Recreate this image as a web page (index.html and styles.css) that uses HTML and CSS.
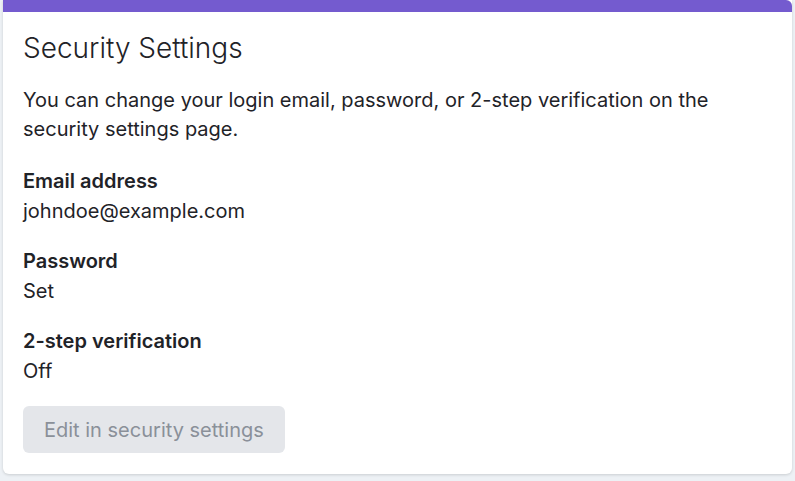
FILE: index.html
```html
<!DOCTYPE html>
<html lang="en">
<head>
    <meta charset="UTF-8">
    <meta name="viewport" content="width=device-width, initial-scale=1.0">
    <title>Security Settings</title>
    <link rel="stylesheet" href="styles.css">
</head>
<body>
    <div class="card">
        <div class="card-bar"></div>
        <div class="card-body">
            <h2>Security Settings</h2>
            <p class="intro">You can change your login email, password, or 2-step verification on the security settings page.</p>

            <div class="field">
                <div class="label">Email address</div>
                <div class="value">johndoe@example.com</div>
            </div>

            <div class="field">
                <div class="label">Password</div>
                <div class="value">Set</div>
            </div>

            <div class="field">
                <div class="label">2-step verification</div>
                <div class="value">Off</div>
            </div>

            <div>
                <button class="edit-btn" disabled>Edit in security settings</button>
            </div>
        </div>
    </div>
</body>
</html>
```

FILE: styles.css
```css
body {
    font-family: Inter, "Noto Sans", sans-serif;
    margin: 0;
    padding: 0 3px;
    background: #edf1f5;
    color: #1f2328;
}

.card {
    background: #ffffff;
    border-radius: 0 0 6px 6px;
    overflow: hidden;
    box-shadow: 0 1px 3px rgba(0, 0, 0, 0.15);
    margin-bottom: 8px;
}

.card-bar {
    height: 12px;
    background: #745bcf;
    border-radius: 0 6px 0 0;
}

.card-body {
    display: flex;
    flex-direction: column;
    gap: 20px;
    padding: 18px 20px 21px;
}

.card-body h2 {
    margin: 0;
    font-size: 28px;
    font-weight: 300;
    line-height: 36px;
}

.intro {
    margin: 0 0 2px;
    font-size: 20px;
    line-height: 29px;
}

.label {
    font-size: 20px;
    font-weight: 600;
    line-height: 30px;
}

.value {
    font-size: 20px;
    line-height: 30px;
}

.edit-btn {
    font-family: inherit;
    font-size: 20px;
    color: #8a9099;
    background: #e4e6ea;
    border: none;
    border-radius: 6px;
    padding: 0 21px;
    height: 47px;
}
```
